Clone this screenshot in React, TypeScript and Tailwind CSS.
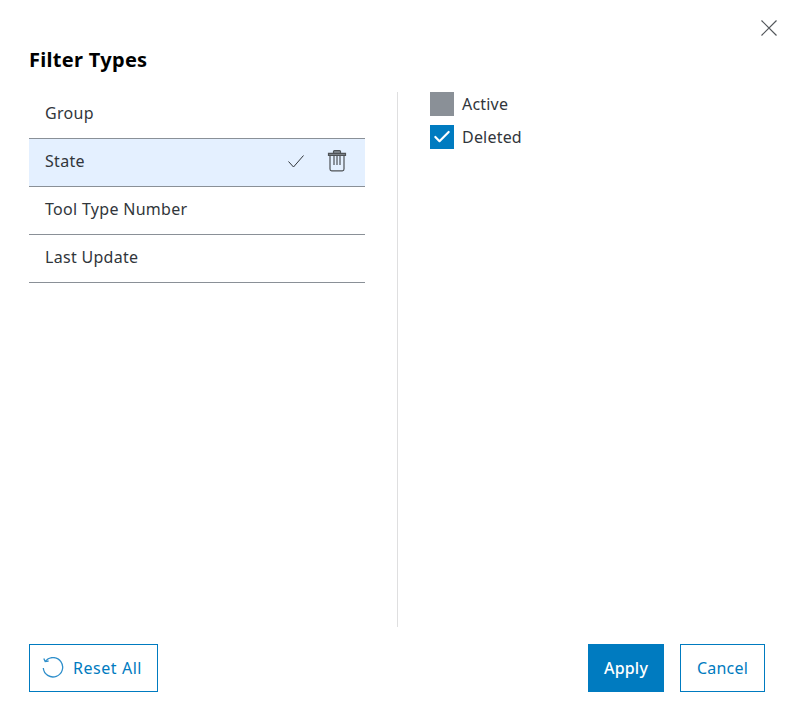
import { Check } from "lucide-react"

const font = { fontFamily: '"Noto Sans", sans-serif' }

const filterTypes = ["Group", "State", "Tool Type Number", "Last Update"]

function TrashIcon() {
  return (
    <svg width="20" height="24" viewBox="0 0 20 24" fill="none" stroke="#4e5256" strokeWidth="1.2">
      <path d="M6.5 4.2V2.6c0-.6.5-1 1-1h5c.6 0 1 .4 1 1v1.6" fill="#8a9097" />
      <path d="M1.5 6.3V4.4h17v1.9z" fill="#8a9097" />
      <path d="M3 6.3V20c0 1 .7 1.8 1.7 1.8h10.6c1 0 1.7-.8 1.7-1.8V6.3" />
      <path d="M7 7v9M10 7v9M13 7v9" />
    </svg>
  )
}

function ResetIcon() {
  return (
    <svg width="22" height="22" viewBox="0 0 22 22" fill="none" stroke="#2f8fcb" strokeWidth="1.3">
      <path d="M3.4 4.2A9.7 9.7 0 1 1 1.3 11" />
      <path d="M1.8 1.4l1.4 3.2 3.4-.6" />
    </svg>
  )
}

export default function App() {
  return (
    <div style={font} className="flex h-[713px] w-[788px] flex-col bg-white pr-[23px] pb-[21px] pl-[29px] text-[#31363b]">
      <div className="flex justify-end pt-5 -mr-[12px]">
        <svg width="16" height="16" viewBox="0 0 16 16" stroke="#53575b" strokeWidth="1.2">
          <path d="M0.5 0.5l15 15M15.5 0.5l-15 15" />
        </svg>
      </div>
      <h1 className="mt-[10px] text-[20px] leading-[28px] font-bold tracking-[0.3px] text-black">Filter Types</h1>
      <div className="mt-[17px] flex min-h-0 flex-1 pb-[17px]">
        <ul className="w-[336px] shrink-0">
          {filterTypes.map((name) => (
            <li
              key={name}
              className={
                "flex h-[48px] items-center justify-between border-b border-[#8a9097] pr-[18px] pb-1 pl-4 text-[16px] tracking-[0.3px] " +
                (name === "State" ? "bg-[#e4f0ff]" : "")
              }
            >
              <span>{name}</span>
              {name === "State" ? (
                <span className="flex items-center gap-[21px]">
                  <svg width="20" height="20" viewBox="0 0 20 20" fill="none" stroke="#31363b" strokeWidth="1">
                    <path d="M2.5 10.5l5 5.5 10-11.5" />
                  </svg>
                  <TrashIcon />
                </span>
              ) : null}
            </li>
          ))}
        </ul>
        <div className="mt-px ml-[32px] w-px bg-[#dfdfe0]" />
        <div className="mt-px ml-[32px] flex flex-col gap-[9px]">
          <label className="flex items-center gap-2 text-[16px] tracking-[0.2px]">
            <span className="h-6 w-6 bg-[#8a9097]" />
            Active
          </label>
          <label className="flex items-center gap-2 text-[16px] tracking-[0.2px]">
            <span className="flex h-6 w-6 items-center justify-center bg-[#007bc0]">
              <Check size={20} strokeWidth={2.6} color="#ffffff" />
            </span>
            Deleted
          </label>
        </div>
      </div>
      <div className="flex items-center justify-between text-[16px] tracking-[0.2px]">
        <button className="flex h-12 w-[129px] items-center gap-[9px] border border-[#007bc0] pl-[12px] tracking-[0.55px] text-[#007bc0]">
          <ResetIcon />
          Reset All
        </button>
        <div className="flex gap-4">
          <button className="h-12 w-[76px] bg-[#007bc0] font-medium text-white">Apply</button>
          <button className="h-12 w-[85px] border border-[#007bc0] text-[#007bc0]">Cancel</button>
        </div>
      </div>
    </div>
  )
}
